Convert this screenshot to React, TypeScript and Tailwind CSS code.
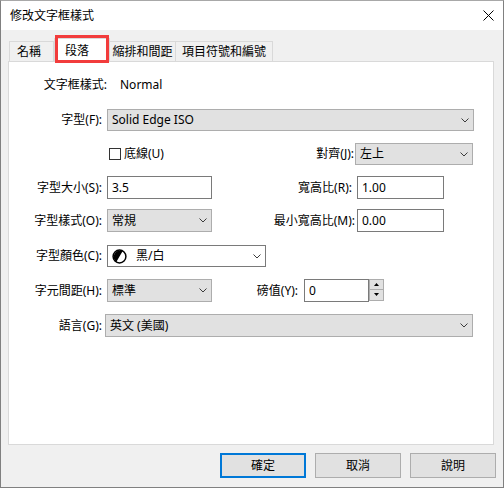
import type { ReactNode } from 'react'

const Chevron = () => (
  <svg width="8" height="5" viewBox="0 0 8 5" className="shrink-0">
    <path d="M0.5 0.5 L4 4 L7.5 0.5" fill="none" stroke="#3c3c3c" strokeWidth="1" />
  </svg>
)

const Combo = ({ className, children }: { className: string; children: ReactNode }) => (
  <div className={`flex items-center justify-between h-full bg-[#e1e1e1] border border-[#adadad] pl-[4px] pr-[4px] ${className}`}>
    <span>{children}</span>
    <Chevron />
  </div>
)

const TextBox = ({ className, value }: { className: string; value: string }) => (
  <div className={`flex items-center h-full bg-white border border-[#7a7a7a] pl-[4px] ${className}`}>{value}</div>
)

const Label = ({ className, children }: { className: string; children: ReactNode }) => (
  <div className={`text-right whitespace-nowrap ${className}`}>{children}</div>
)

const ColorIcon = () => (
  <svg width="15" height="15" viewBox="0 0 15 15" className="shrink-0">
    <circle cx="7.5" cy="7.5" r="6.4" fill="#fff" stroke="#000" strokeWidth="1.5" />
    <path d="M10.7 2 A6.4 6.4 0 0 0 4.3 13 Z" fill="#000" />
  </svg>
)

export default function App() {
  return (
    <div className="w-[504px] h-[488px] flex flex-col bg-[#f0f0f0] border border-[#808080] border-t-[#a8a8a8] text-[12px] leading-none text-black font-['Noto_Sans','Noto_Sans_CJK_TC',sans-serif]">
      {/* title bar */}
      <div className="h-[29px] shrink-0 bg-white flex items-center justify-between pl-[9px] pr-[9px]">
        <span>修改文字框樣式</span>
        <svg width="11" height="11" viewBox="0 0 11 11">
          <path d="M0.5 0.5 L10.5 10.5 M10.5 0.5 L0.5 10.5" stroke="#000" strokeWidth="1" />
        </svg>
      </div>

      <div className="flex-1 flex flex-col pl-[7px]">
        {/* tabs */}
        <div className="h-[31px] shrink-0 flex items-end pl-[1px]">
          <div className="w-[45px] h-[20px] flex items-center pl-[7px] border-t border-l border-r border-[#d9d9d9]">名稱</div>
          <div className="relative z-10 -mb-px w-[56px] h-[24px] flex items-center pl-[10px] bg-white border-t border-l border-r border-[#d9d9d9]">
            段落
            <div className="absolute left-0 right-0 -top-[4px] -bottom-[1px] border-[3px] border-[#f23c3c]" />
          </div>
          <div className="w-[66px] h-[20px] flex items-center justify-center border-t border-r border-[#d9d9d9]">縮排和間距</div>
          <div className="w-[97px] h-[20px] flex items-center justify-center border-t border-r border-[#d9d9d9]">項目符號和編號</div>
        </div>

        {/* panel */}
        <div className="w-[486px] h-[384px] shrink-0 bg-white border border-[#d9d9d9] flex flex-col">
          <div className="mt-[12px] h-[22px] flex items-center">
            <Label className="w-[98px]">文字框樣式:</Label>
            <span className="ml-[13px]">Normal</span>
          </div>

          <div className="mt-[13px] h-[22px] flex items-center">
            <Label className="w-[93px]">字型(F):</Label>
            <Combo className="ml-[5px] w-[367px]">Solid Edge ISO</Combo>
          </div>

          <div className="mt-[12px] h-[22px] flex items-center">
            <div className="w-[203px] flex items-center">
              <div className="w-[100px]" />
              <div className="w-[12px] h-[12px] border border-[#333] bg-white" />
              <span className="ml-[3px]">底線(U)</span>
            </div>
            <Label className="w-[142px]">對齊(J):</Label>
            <Combo className="ml-[1px] w-[118px]">左上</Combo>
          </div>

          <div className="mt-[11px] h-[23px] flex items-center">
            <Label className="w-[93px]">字型大小(S):</Label>
            <TextBox className="ml-[5px] w-[105px]" value="3.5" />
            <Label className="w-[140px]">寬高比(R):</Label>
            <TextBox className="ml-[5px] w-[87px]" value="1.00" />
          </div>

          <div className="mt-[10px] h-[23px] flex items-center">
            <Label className="w-[93px]">字型樣式(O):</Label>
            <Combo className="ml-[5px] w-[105px]">常規</Combo>
            <Label className="w-[143px]">最小寬高比(M):</Label>
            <TextBox className="ml-[2px] w-[87px]" value="0.00" />
          </div>

          <div className="mt-[13px] h-[22px] flex items-center">
            <Label className="w-[93px]">字型顏色(C):</Label>
            <div className="ml-[5px] w-[159px] h-full flex items-center justify-between bg-white border border-[#7a7a7a] pl-[4px] pr-[4px]">
              <div className="flex items-center">
                <ColorIcon />
                <span className="ml-[9px]">黑/白</span>
              </div>
              <Chevron />
            </div>
          </div>

          <div className="mt-[12px] h-[23px] flex items-center">
            <Label className="w-[93px]">字元間距(H):</Label>
            <Combo className="ml-[5px] w-[105px]">標準</Combo>
            <Label className="w-[86px]">磅值(Y):</Label>
            <TextBox className="ml-[6px] w-[65px]" value="0" />
            <div className="-mt-[2px] w-[15px] h-[22px] flex flex-col">
              <div className="flex-1 flex items-center justify-center bg-[#e1e1e1] border border-[#adadad]">
                <svg width="5" height="3" viewBox="0 0 5 3"><path d="M0 3 L2.5 0 L5 3 Z" fill="#000" /></svg>
              </div>
              <div className="flex-1 flex items-center justify-center bg-[#e1e1e1] border border-t-0 border-[#adadad]">
                <svg width="5" height="3" viewBox="0 0 5 3"><path d="M0 0 L2.5 3 L5 0 Z" fill="#000" /></svg>
              </div>
            </div>
          </div>

          <div className="mt-[12px] h-[23px] flex items-center">
            <Label className="w-[93px]">語言(G):</Label>
            <Combo className="ml-[3px] w-[368px]">英文 (美國)</Combo>
          </div>
        </div>

        {/* buttons */}
        <div className="mt-[8px] h-[25px] flex justify-end gap-[9px] pr-[7px]">
          <div className="w-[86px] h-full flex items-center justify-center bg-[#e1e1e1] border-2 border-[#0078d7]">確定</div>
          <div className="w-[86px] h-full flex items-center justify-center bg-[#e1e1e1] border border-[#adadad]">取消</div>
          <div className="w-[86px] h-full flex items-center justify-center bg-[#e1e1e1] border border-[#adadad]">說明</div>
        </div>
      </div>
    </div>
  )
}
